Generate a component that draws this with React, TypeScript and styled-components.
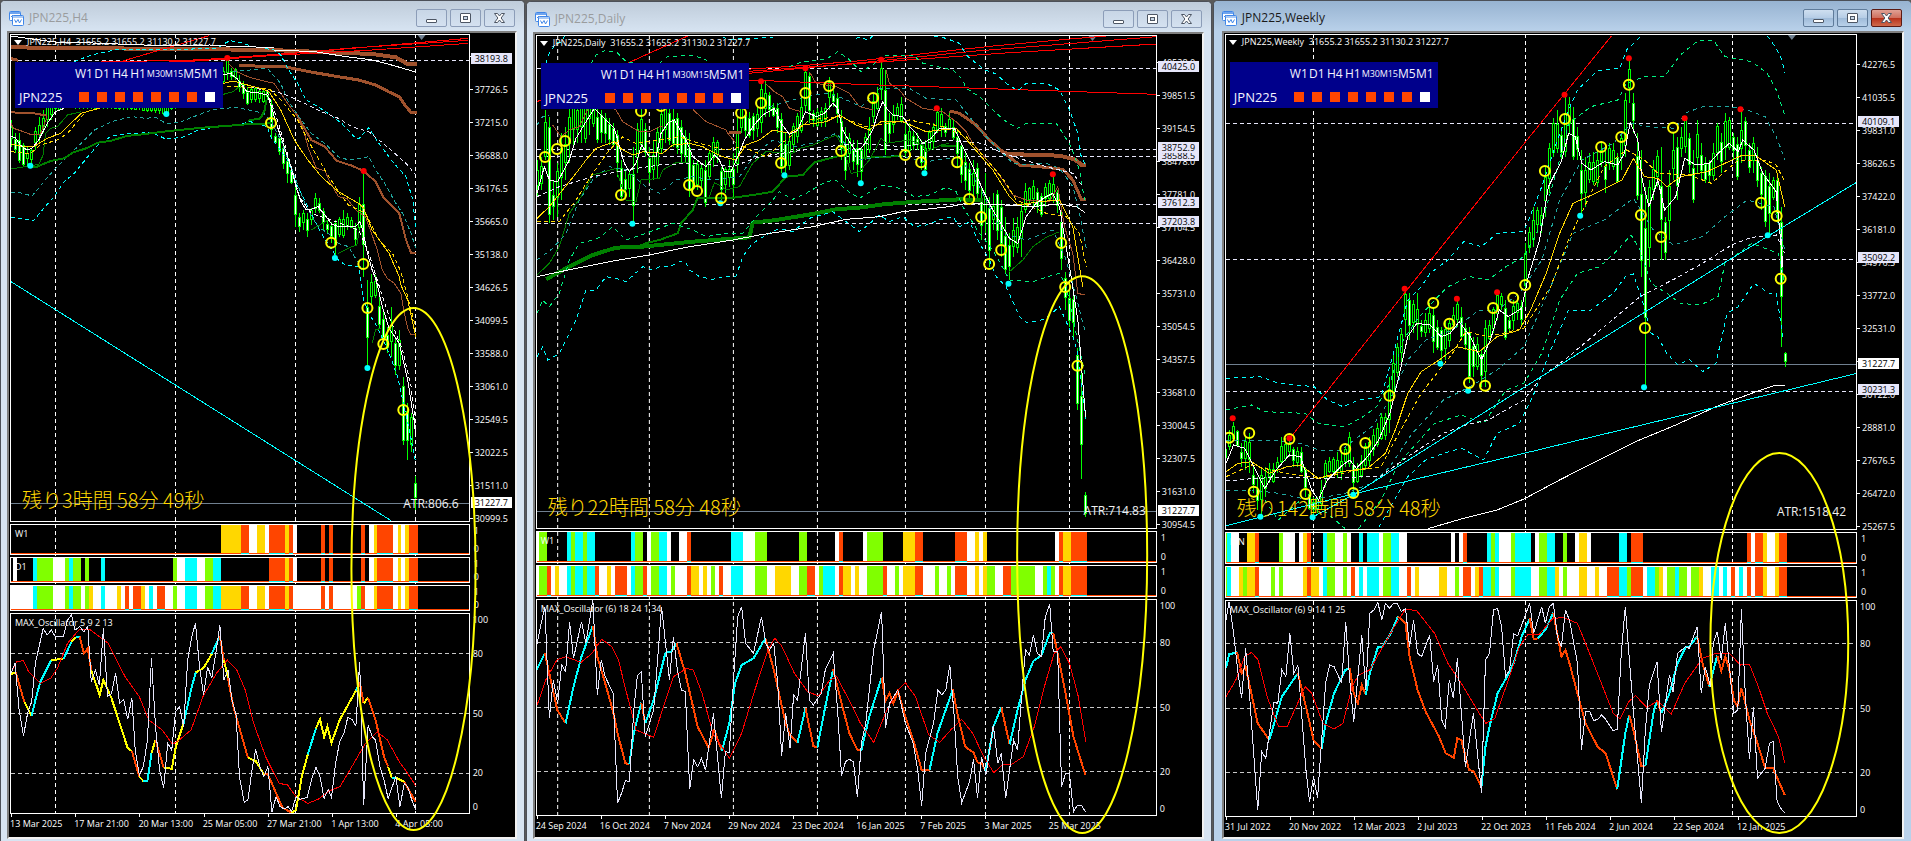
import React from "react";
import styled, { createGlobalStyle, css } from "styled-components";

const GlobalStyle = createGlobalStyle`
  *, *::before, *::after { box-sizing: border-box; }
  html, body { margin: 0; background: #5a5a5a; }
  body { font-family: "Open Sans", "Noto Sans", sans-serif; }
`;

const small = css`
  font: 9px/14px "Open Sans", "Noto Sans", sans-serif;
  white-space: pre;
`;

/* ---------- types ---------- */

type Line = { c: string; w?: number; dash?: string; p: string[] };
type Box = { text: string; top: number; live?: boolean };
type Strip = { label: string; height: number; base?: [number, number]; bars: string };
type ChartSpec = {
  name: string;
  active?: boolean;
  lowered?: boolean;
  grow: number;
  timer: string;
  atr: string;
  mainHeight: number;
  mainBox: string;
  oscBox: string;
  oscHeight: number;
  stripX: [number, number];
  grid: number[];
  levels: number[];
  liveLevel: number;
  shift: number;
  step: number;
  unitX: number;
  range: number[][];
  lines: Line[];
  rings: string;
  highs: string;
  lows: string;
  prices: string[];
  pricePad: number;
  boxes: Box[];
  strips: Strip[];
  oscName: string;
  oscLevels: number[];
  oscWhite: string;
  oscRed: string;
  oscThick: string;
  dates: string[];
  dateTail: number;
  ellipseBox: string;
  ellipse: [number, number, number, number];
};

/* ---------- palette ---------- */

const CYAN = "#00ffff";
const TEAL = "#20a8a0";
const SPRING = "#00f080";
const GOLD = "#ffd700";
const SIENNA = "#a0522d";
const GREEN = "#008000";
const LAVENDER = "#e6e6fa";
const barColor: Record<string, string> = {
  W: "#ffffff", Y: "#ffd700", O: "#ff4500", G: "#80ff00", C: "#00ffff",
};
const oscColor: Record<string, string> = { Y: "#ffff00", O: "#ff4500", C: "#00ffff" };

/* ---------- chart data ---------- */

const h4: ChartSpec = {
  name: "JPN225,H4",
  grow: 524,
  timer: "残り3時間 58分 49秒",
  atr: "ATR:806.6",
  mainHeight: 488,
  mainBox: "33 105 1352 1458",
  oscBox: "33 312 1352 597",
  oscHeight: 201,
  stripX: [33, 1352],
  grid: [165, 519, 874, 1229],
  levels: [181],
  liveLevel: 1510,
  shift: 1246,
  step: 11.83,
  unitX: 2.958,
  range: [
    [36,360,440],[45,400,460],[60,400,490],[72,430,500],[92,445,495],[104,380,450],[118,350,430],[130,330,400],[140,310,380],[165,290,340],[190,285,325],
    [410,310,330],[490,300,345],[505,300,330],[640,240,300],[660,200,250],[672,175,240],[690,205,240],[708,225,275],[732,260,315],[755,262,305],[780,265,310],[792,270,300],
    [803,300,415],[815,400,430],[827,410,465],[850,465,550],[862,500,552],[875,560,680],[886,640,695],[898,630,690],[910,640,710],[922,625,675],[934,580,640],
    [945,595,640],[957,625,690],[970,660,700],[980,665,730],[992,660,765],[1004,650,710],[1016,630,715],[1028,640,690],[1040,650,685],[1052,670,735],
    [1064,590,690],[1076,520,830],[1088,840,1095],[1099,822,915],[1110,825,895],[1122,890,985],[1134,935,1020],[1146,980,1060],[1158,920,1070],
    [1170,1010,1125],[1181,990,1110],[1193,1130,1335],[1205,1210,1380],[1217,1240,1355],[1229,1428,1530],
  ],
  lines: [
    { c: SIENNA, w: 4, p: ["33,142 300,145 560,147 800,150 1000,158 1100,162 1170,172 1205,192 1233,192"] },
    { c: SIENNA, w: 3, p: ["708,197 840,200 880,208 930,218 1000,230 1060,240 1110,255 1150,276 1180,290 1200,320 1215,337 1232,338", "33,176 54,181"] },
    { c: SIENNA, w: 2, p: ["875,340 900,385 920,420 960,440 995,482 1040,497 1075,513 1110,545 1135,595 1180,640 1200,720 1215,759 1230,759", "33,337 100,340 140,347"] },
    { c: SIENNA, p: ["675,190 700,215 740,233 810,250 850,310 880,350 900,400 910,440 935,505 960,512 975,545 1000,590 1025,595 1052,630 1080,650 1100,705 1115,750 1130,810 1145,835 1165,850 1185,880 1195,940 1205,985 1215,1004 1229,1004", "33,370 40,385 70,395 95,405 120,402 140,350"] },
    { c: "#ff0000", w: 1, p: ["1384,115 960,152 660,178 300,186", "1384,121 1040,144 860,160 500,186", "1384,130 1100,150 800,167 480,190", "618,107 370,181 345,190"] },
    { c: CYAN, dash: "4 3", p: ["220,185 270,165 340,150 500,148 640,146 665,130 680,122 720,130 740,138 810,150 830,165 850,205 880,250 905,300 940,320 970,340 1010,370 1050,413 1062,415 1090,383 1120,430 1160,485 1200,530 1220,600 1229,690", "33,652 60,655 100,661 130,625 160,590 190,545 220,520 260,470 290,435 330,408 390,400 450,398 490,417 540,412 580,393 640,380 700,375 740,365 790,380 800,410 850,480 880,560 900,600 920,640 950,700 975,740 1000,780 1020,795 1060,800 1075,900 1090,940 1115,980 1150,1060 1175,1130 1190,1200 1210,1290 1225,1370 1229,1390"] },
    { c: TEAL, dash: "4 3", p: ["690,215 790,205 830,250 850,300 880,345 920,400 960,430 1000,470 1030,480 1090,470 1110,510 1140,555 1170,610 1190,640 1215,700 1229,745", "33,578 60,578 95,588 110,570 130,545 160,510 200,470 240,430 280,390 330,365 390,350 430,355 460,352 490,370 530,368 560,355 630,328 700,322 780,340 805,370 830,420 860,500 890,580 905,620 940,680 970,700 1000,730 1030,740 1060,790 1075,820"] },
    { c: LAVENDER, dash: "4 3", p: ["740,262 810,275 840,282 900,310 950,335 1000,355 1040,380 1090,395 1150,445 1200,490 1229,525"] },
    { c: GREEN, w: 2, p: ["85,500 110,500 150,483 190,475 215,458 255,445 290,428 330,422 375,408 430,402 500,393 600,383 680,377 740,372 803,370", "733,362 770,355 783,330 787,300"] },
    { c: GREEN, p: ["33,507 85,498 115,493 128,465 135,400 150,385 170,380 200,345 240,335", "660,283 690,275 705,262 725,258", "920,690 940,678 970,660", "1000,760 1040,740 1055,735 1062,690", "1100,1030 1110,990 1125,985"] },
    { c: GOLD, p: ["33,432 70,440 100,440 140,415 180,400 210,370 240,340 300,323", "660,250 690,243 720,252 770,265 795,275 830,330 870,420 910,480 950,530 1000,575 1060,610 1075,625 1100,690 1150,760 1180,830 1185,855 1205,900 1229,1010"] },
    { c: GOLD, dash: "4 3", p: ["33,455 90,461 120,435 170,420 200,400 250,340", "670,260 760,262 800,270 830,300 880,360 910,420 960,510 1000,575 1030,615 1080,640 1120,720 1160,760 1185,815 1210,910 1229,985"] },
    { c: "#ffffff", p: ["33,108 80,115 170,127 250,128 500,138 620,135 700,140 810,142", "810,150 930,155 1010,168 1100,180 1140,190 1229,216", "33,410 45,412 60,435 80,450 95,445 115,420 140,370 165,335 190,325", "660,225 680,220 700,235 715,255 730,275 760,278 790,285 805,330 820,380 840,440 860,500 875,560 890,605 905,630 920,628 940,620 960,645 980,672 1000,680 1050,680 1064,665 1072,690 1085,755 1100,810 1112,840 1130,920 1150,985 1180,1030 1205,1140 1225,1270 1229,1310"] },
    { c: "#ffffff", dash: "4 3", p: ["790,275 820,360 850,460 885,590 920,640 980,660 1060,690 1090,760 1115,840 1150,950 1190,1050 1215,1160 1229,1280"] },
    { c: CYAN, p: ["33,845 1156,1562"] },
  ],
  rings: "801,369 979,728 1074,792 1086,924 1133,1032 1192,1230",
  highs: "672,174 1075,513",
  lows: "90,497 492,342 990,774 1086,1104",
  prices: ["38238.0","37726.5","37215.0","36688.0","36176.5","35665.0","35138.0","34626.5","34099.5","33588.0","33061.0","32549.5","32022.5","31511.0","30999.5"],
  pricePad: 6,
  boxes: [{ text: "38193.8", top: 19 }, { text: "31227.7", top: 463, live: true }],
  strips: [
    { label: "W1", height: 31, bars: "Y654-713,O713-737,W737-760,Y760-784,W784-796,O796-843,Y843-855,O855-867,W867-879,O950-962,O973-985,O1068-1080,W1092-1104,Y1104-1115,O1115-1163,W1163-1175,Y1175-1186,W1186-1198,Y1198-1210,O1210-1234" },
    { label: "D1", height: 26, bars: "W38-50,C98-110,G110-157,W157-192,G192-204,C204-215,G215-240,G251-263,C299-311,G512-524,W524-547,C547-583,W583-606,G606-629,C629-654,O796-843,Y843-855,O855-867,W867-879,O950-962,O973-985,O1068-1080,W1092-1104,Y1104-1115,O1115-1163,W1163-1175,Y1175-1186,W1186-1198,Y1198-1210,O1210-1234" },
    { label: "", height: 26, base: [31, 1234], bars: "C98-110,G110-157,G192-204,C204-215,G215-240,G251-263,Y263-275,C299-311,Y346-358,O370-382,O393-417,Y417-429,C441-453,O464-488,G512-524,C547-583,G606-629,C629-654,Y654-713,O713-737,Y760-784,O796-843,Y843-855,O855-867,O950-962,O973-985,G1056-1068,O1068-1080,Y1104-1115,O1115-1163,Y1175-1186,Y1198-1210,O1210-1234" },
  ],
  oscName: "MAX_Oscillator 5 9 2 13",
  oscLevels: [431, 610, 790],
  oscWhite: "33,490 45,460 57,600 70,677 82,610 94,575 105,460 128,355 140,375 152,360 164,380 188,380 200,330 212,314 222,360 236,350 248,365 260,350 270,515 283,480 294,525 306,355 318,560 330,550 342,490 354,580 366,568 378,628 390,563 400,720 412,795 424,770 436,690 448,445 460,650 472,780 484,835 496,700 508,720 519,605 531,590 543,650 555,450 567,380 578,340 590,470 602,555 614,470 626,505 638,430 650,345 662,510 674,480 686,570 698,615 708,800 722,877 733,870 745,780 756,718 768,770 780,800 792,770 804,907 816,860 828,890 840,897 852,890 862,905 875,860 887,868 908,862 922,805 934,772 946,800 958,865 970,838 980,862 992,760 1004,695 1016,672 1028,622 1040,628 1052,648 1063,455 1075,885 1088,645 1100,680 1110,690 1123,770 1135,810 1147,865 1170,800 1182,890 1195,820 1205,830 1217,870 1229,900",
  oscRed: "33,490 50,455 70,452 85,485 120,520 150,505 170,475 200,400 235,358 265,358 320,400 370,500 412,560 440,630 480,660 510,703 530,690 565,660 600,560 640,490 672,450 700,480 725,540 750,640 785,740 825,820 850,825 875,860 910,880 940,868 975,842 1005,830 1040,770 1080,700 1115,665 1145,690 1180,755 1205,790 1229,828",
  oscThick: "Y 33,492 47,487|O 72,575|Y 94,618|C 105,570 120,515 152,450|Y 188,447|C 212,395|Y 224,382|C 236,380|O 248,430 260,415 270,480|Y 295,555 306,510 330,565 354,640 378,715 390,723|O 412,800|Y 424,813|C 436,813 448,730|Y 460,690|O 484,773|Y 508,776 520,710 543,640|C 567,530 579,487|Y 602,474 626,432|C 650,377|O 662,450|Y 674,505|O 690,590 733,743|Y 756,753 780,793|O 792,793 835,893 862,908|Y 875,900 892,800 910,733|C 934,655|Y 946,628 958,680 968,650 980,698 1004,630 1052,542|C 1063,515|O 1075,580|Y 1088,563|O 1110,630 1135,740 1147,770|Y 1158,803|C 1170,803|Y 1195,816|O 1229,877",
  dates: ["13 Mar 2025", "17 Mar 21:00", "20 Mar 13:00", "25 Mar 05:00", "27 Mar 21:00", "1 Apr 13:00", "4 Apr 05:00"],
  dateTail: 10,
  ellipseBox: "10 34 504 800",
  ellipse: [413, 567, 62, 260],
};

const daily: ChartSpec = {
  name: "JPN225,Daily",
  lowered: true,
  grow: 686,
  timer: "残り22時間 58分 48秒",
  atr: "ATR:714.83",
  mainHeight: 494,
  mainBox: "33 108 1857 1476",
  oscBox: "25 270 1407 645",
  oscHeight: 217,
  stripX: [25, 1407],
  grid: [95, 370, 622, 874, 1138, 1378, 1630],
  levels: [205, 448, 469, 613, 670],
  liveLevel: 1534,
  shift: 1699,
  step: 12,
  unitX: 3,
  range: [
    [35,480,590],[47,470,570],[60,330,480],[70,350,670],[83,540,660],[95,490,650],[107,400,600],[119,380,540],[131,270,490],[143,280,440],[155,280,430],[180,250,430],
    [200,260,380],[215,320,430],[240,340,430],[262,370,440],[275,390,530],[287,480,600],[300,510,600],[311,510,590],[323,440,670],[335,370,520],[347,320,450],[359,370,470],
    [371,440,550],[383,420,540],[395,380,535],[407,320,460],[420,290,430],[443,320,440],[467,360,485],[480,390,490],[490,400,590],[502,480,570],[514,480,570],[526,490,560],
    [538,480,620],[550,450,540],[562,410,500],[574,420,490],[586,500,600],[598,500,580],[610,480,560],[622,460,590],[634,350,520],[646,290,400],[658,330,410],[680,340,420],
    [694,320,410],[706,250,400],[718,240,350],[742,310,350],[755,310,400],[768,340,520],[780,400,530],[792,400,510],[804,370,460],[816,340,430],[828,290,400],[838,205,340],
    [850,215,370],[862,330,380],[886,320,380],[898,310,380],[910,230,330],[922,270,320],[934,280,370],[946,330,480],[958,380,540],[970,400,490],[982,420,510],[994,420,530],
    [1006,440,545],[1018,400,480],[1030,350,460],[1042,280,370],[1054,260,330],[1066,180,300],[1078,210,465],[1090,340,430],[1102,315,400],[1114,310,360],[1126,290,370],
    [1138,370,470],[1150,370,460],[1162,390,450],[1174,400,450],[1186,420,510],[1198,420,520],[1210,390,450],[1222,370,450],[1234,330,400],[1246,325,410],[1258,370,410],
    [1270,340,390],[1282,360,420],[1294,390,500],[1306,430,550],[1318,460,570],[1330,490,600],[1342,480,600],[1354,490,600],[1366,560,720],[1378,520,700],[1390,590,800],
    [1402,580,690],[1414,570,720],[1426,600,770],[1438,650,820],[1450,700,840],[1462,655,770],[1474,650,760],[1486,610,770],[1498,550,640],[1510,560,610],[1522,540,620],
    [1534,565,640],[1546,580,650],[1558,550,620],[1570,540,600],[1582,520,610],[1594,570,640],[1606,620,810],[1618,815,930],[1630,850,980],[1642,875,1020],[1654,1045,1230],[1666,1120,1437],[1678,1475,1550],
  ],
  lines: [
    { c: GREEN, w: 4, p: ["60,838 120,805 200,765 270,743 350,740 500,725 670,712 680,668 750,660 860,642 930,628 1010,622 1070,613 1160,606 1300,598 1370,600"] },
    { c: GREEN, w: 2, p: ["340,738 365,728 400,720 455,700 465,670 500,630 514,595 610,595 700,582 740,575 780,530 830,525 865,487 950,465", "1010,475 1040,472 1130,468", "1245,438 1290,438"] },
    { c: GREEN, p: ["33,825 70,790 100,740 130,640 165,590 200,525 270,505 300,600 330,605 345,540 400,535 410,510 450,488 490,488", "550,590 565,548 580,555 600,570 640,560 680,490 720,455 800,460 820,445 860,435 930,405 950,440 975,520 1000,515 1030,480 1065,415 1080,430 1150,420 1190,435 1200,455 1245,435 1270,430", "1450,815 1490,780 1520,740 1560,712 1600,695"] },
    { c: SIENNA, w: 3, p: ["1270,333 1300,340 1350,375 1390,420 1430,455 1480,495 1560,502 1610,508 1640,540 1665,597 1678,597", "610,397 645,397"] },
    { c: SIENNA, w: 4, p: ["1433,460 1500,464 1600,467 1645,478 1668,496 1680,496"] },
    { c: SIENNA, p: ["80,375 105,410 130,390 160,380 200,300 270,330 290,365 340,395 370,395 400,380 410,380", "500,328 540,365 600,390 605,400 630,430", "718,250 745,275 770,290 790,325 825,335", "850,215 870,250 930,260 970,280 1000,320 1040,330", "1080,210 1090,250 1120,270 1140,295 1190,325 1250,335 1290,365 1320,395 1340,430 1400,500 1430,540 1460,585 1500,600 1570,605 1595,560 1615,680 1640,760 1655,880 1675,885"] },
    { c: "#ff0000", w: 1, p: ["303,190 485,108", "660,208 840,196 1005,182 1200,160 1400,138 1620,118 1740,108", "668,220 1005,188 1350,153 1891,110", "668,214 1005,190 1450,158 1891,132", "668,240 1000,253 1891,283", "33,305 50,298"] },
    { c: CYAN, dash: "4 4", p: ["60,190 70,160 90,130 110,125 115,108", "590,110 605,118 740,112", "990,115 1005,110 1025,122 1040,108", "1225,108 1260,115 1300,130 1320,165 1350,190 1378,210 1410,222 1440,250 1475,272 1500,250 1560,250 1600,270 1630,330 1655,400 1665,470 1680,500", "33,1070 50,1040 65,1080 100,1060 150,960 180,870 210,870 240,830 270,835 300,845 350,800 380,810 400,800 430,800 460,785 478,785 490,810 520,830 560,838 600,828 630,828 650,770 680,730 720,705 760,685 800,695 850,655 920,635 960,665 1000,695 1020,680 1060,645 1090,665 1130,650 1165,680 1200,675 1240,660 1280,650 1300,680 1330,665 1360,730 1390,780 1410,830 1440,860 1480,950 1500,967 1530,965 1560,955 1600,920 1640,1010 1655,1060 1675,1230 1680,1260"] },
    { c: SPRING, dash: "4 4", p: ["195,190 210,165 235,153 270,155 300,185 340,190", "400,190 425,170 500,165 540,180 560,200 590,185", "790,200 830,185 900,178 935,155 965,175 1005,215 1040,195 1070,165 1160,165 1190,190 1280,210 1310,240 1320,265 1360,290 1400,330 1440,365 1475,385 1500,370 1590,370 1610,400 1635,440 1660,510 1675,600", "33,940 50,900 70,920 100,880 130,780 160,730 200,720 225,710 260,680 300,720 360,700 440,670 500,690 540,710 600,700 650,700 700,640 740,600 760,575 800,598 840,580 900,545 930,540 960,570 1000,595 1065,555 1120,565 1165,590 1210,585 1260,562 1290,575 1310,620 1360,700 1400,750 1450,840 1520,845 1580,825 1600,820 1620,860 1650,1000 1678,1130"] },
    { c: TEAL, dash: "4 4", p: ["33,375 50,350 70,345", "730,320 800,300 860,285 900,280 950,295 1005,320 1060,265 1150,265 1200,295 1290,300 1310,325 1370,400 1420,450 1460,490 1500,495 1560,490 1600,505 1640,560 1660,640 1680,745", "33,780 80,745 120,700 160,600 200,540 250,500 300,510 360,560 400,580 450,540 500,530 560,540 640,530 690,460 740,420 800,440 860,430 930,400 1000,480 1100,465 1200,485 1300,470 1360,560 1430,700 1500,720 1580,690 1620,780 1650,890 1678,1000"] },
    { c: LAVENDER, dash: "4 3", p: ["33,590 100,560 200,530 300,510 400,495 500,490 620,500 700,470 800,455 900,440 1000,430 1130,440 1250,420 1370,430 1430,460 1560,500 1640,520 1670,560"] },
    { c: GOLD, p: ["33,655 70,620 110,570 150,520 180,480 210,445 265,425 290,450 320,465 350,455 410,460 440,435 490,430 530,440 590,470 630,480 660,435 700,420 740,390 790,400 830,375 900,365 940,345 990,375 1030,390 1065,365 1130,365 1200,395 1290,385 1340,440 1400,510 1450,590 1475,615 1540,605 1600,600 1640,680 1670,860"] },
    { c: GOLD, dash: "4 3", p: ["33,665 100,665 150,600 200,520 250,450 290,410 330,430 400,420 460,410 520,430 600,450 650,440 720,470 780,420 850,360 940,350 1020,380 1150,360 1250,380 1320,410 1400,500 1440,550 1470,600 1560,640 1620,650 1660,700 1680,800"] },
    { c: "#ffffff", p: ["33,830 150,805 250,785 370,765 480,742 620,720 700,705 860,680 960,658 1060,650 1130,635 1270,620 1320,610 1420,614 1520,620 1600,612 1650,620 1677,638", "33,580 55,500 70,540 95,545 130,480 150,415 180,365 205,325 230,350 265,385 280,440 295,490 310,515 330,490 347,435 370,470 390,470 405,400 425,370 445,360 480,420 500,470 540,500 565,465 580,480 595,515 615,515 635,470 655,420 680,380 710,345 745,325 765,370 790,403 815,390 838,335 870,350 895,340 920,310 935,325 950,390 970,425 990,455 1010,440 1040,390 1055,340 1070,305 1085,330 1100,345 1130,350 1150,380 1170,400 1190,430 1215,415 1240,385 1285,385 1310,440 1340,500 1370,570 1400,630 1430,680 1450,715 1475,730 1500,650 1530,610 1560,590 1580,580 1600,620 1630,800 1655,960 1678,1250"] },
  ],
  rings: "57,471 93,447 117,423 285,585 345,333 405,318 489,555 513,573 585,595 645,339 705,309 765,489 838,279 909,258 945,453 1041,294 1137,465 1185,487 1293,487 1329,597 1365,651 1389,792 1425,750 1605,729 1617,861 1654,1097",
  highs: "705,244 838,205 1065,179 1232,325 1580,523",
  lows: "319,671 583,610 775,526 1004,550 1195,520 1447,851",
  prices: ["40528.0","39851.5","39154.5","38478.0","37781.0","37104.5","36428.0","35731.0","35054.5","34357.5","33681.0","33004.5","32307.5","31631.0","30954.5"],
  pricePad: 11,
  boxes: [
    { text: "38588.5", top: 115 }, { text: "40425.0", top: 26 }, { text: "38752.9", top: 107 },
    { text: "37612.3", top: 162 }, { text: "37203.8", top: 181 }, { text: "31227.7", top: 470, live: true },
  ],
  strips: [
    { label: "W1", height: 32, bars: "W24-30,G30-48,C93-102,G102-111,C111-129,G129-139,C139-157,C239-248,G248-266,W275-284,G284-302,C302-320,W320-330,W348-366,O366-375,C466-493,W493-520,G520-548,G620-639,W702-711,O711-720,W766-775,G775-811,Y857-884,O884-902,O975-1002,W1002-1020,Y1020-1029,W1029-1039,Y1039-1048,W1202-1211,O1211-1220,Y1220-1238,O1238-1275" },
    { label: "", height: 32, base: [24, 1275], bars: "G30-48,O48-57,Y66-75,C93-102,G102-111,C111-129,G129-139,C139-157,O157-166,Y184-193,O202-230,C239-248,G248-266,O266-275,G284-302,C302-320,G330-339,O366-375,Y375-393,Y402-411,G420-429,O439-448,C466-493,G520-548,Y566-602,G620-639,O639-657,G666-675,C675-702,O711-720,Y720-739,Y748-757,G775-811,O811-820,G839-848,Y857-884,O884-902,G929-939,G957-966,O975-1002,Y1020-1029,Y1039-1048,G1048-1066,O1084-1102,G1102-1157,G1175-1184,C1184-1193,G1193-1202,O1211-1220,Y1220-1238,O1238-1275" },
  ],
  oscName: "MAX_Oscillator (6) 18 24 1 34",
  oscLevels: [398, 593, 785],
  oscWhite: "24,410 33,350 43,290 53,625 62,510 72,580 81,465 90,485 99,335 108,445 126,335 136,400 152,270 162,555 171,450 180,500 198,550 208,880 217,850 226,812 235,815 245,600 253,497 262,485 271,680 290,600 299,450 308,290 326,510 335,380 344,480 353,540 362,545 372,838 381,750 390,770 399,745 408,780 426,610 444,865 453,725 462,728 472,500 481,320 490,290 499,400 517,430 535,320 545,400 553,420 563,400 572,520 581,738 590,610 600,715 608,555 617,570 635,370 644,570 653,585 671,550 680,480 698,430 708,600 717,798 726,755 735,748 744,755 753,862 762,700 772,640 790,420 808,305 817,655 826,580 845,540 862,640 880,700 890,780 899,888 908,730 926,640 936,540 945,555 954,540 963,465 972,600 981,800 990,878 1008,815 1017,748 1026,865 1035,740 1045,795 1062,645 1072,760 1080,730 1090,865 1108,690 1117,720 1126,560 1135,420 1144,435 1153,375 1162,430 1171,440 1180,320 1190,282 1198,425 1208,425 1217,830 1226,790 1235,792 1244,905 1253,885 1262,885 1271,905",
  oscRed: "24,590 45,510 70,450 90,440 125,457 150,430 172,388 195,410 210,450 225,530 250,660 290,682 310,600 335,500 365,475 380,480 400,550 425,670 462,745 490,670 520,540 550,420 565,385 580,405 610,490 640,545 665,558 690,510 706,500 730,560 760,640 790,697 820,600 845,540 862,518 885,560 915,675 940,697 965,660 990,628 1015,670 1040,740 1063,788 1085,762 1105,762 1130,740 1155,650 1180,520 1200,430 1215,410 1235,460 1255,560 1272,695",
  oscThick: "C 24,480 43,430|O 53,490 71,600 90,640|C 108,530 126,440 152,347|O 162,440 180,520 198,605 208,670 226,760 235,762|C 245,670 262,578|O 271,640|C 290,570 317,428 330,425 342,400|O 362,490 390,650 415,713 428,660 445,723|C 462,640 475,520 490,465 517,445 544,385|O 563,480 590,640 600,675 617,698|C 635,595|O 653,708 662,713|C 680,590 698,478|O 717,580 735,670 753,720 762,722|C 780,620 808,503|O 817,573 826,550 835,580 845,543 862,620 880,690 899,780 917,780|C 935,670 970,538|O 980,610 998,710 1017,728 1026,757 1035,760 1045,783|C 1062,650 1080,592|O 1099,703|C 1117,600 1135,510 1153,453 1171,437 1190,370 1198,368|O 1208,430 1226,550 1244,680 1271,795",
  dates: ["24 Sep 2024", "16 Oct 2024", "7 Nov 2024", "29 Nov 2024", "23 Dec 2024", "16 Jan 2025", "7 Feb 2025", "3 Mar 2025", "25 Mar 2025"],
  dateTail: 44,
  ellipseBox: "535 35 666 801",
  ellipse: [1081, 554, 65, 278],
};

const weekly: ChartSpec = {
  name: "JPN225,Weekly",
  active: true,
  grow: 699,
  timer: "残り142時間 58分 48秒",
  atr: "ATR:1518.42",
  mainHeight: 496,
  mainBox: "33 105 1411 1482",
  oscBox: "33 273 1411 645",
  oscHeight: 217,
  stripX: [33, 1411],
  grid: [229, 703, 1168],
  levels: [370, 778, 1174],
  liveLevel: 1093,
  shift: 1300,
  step: 8.95,
  unitX: 2.237,
  range: [
    [33,1330,1390],[42,1290,1350],[50,1265,1320],[60,1290,1340],[70,1330,1400],[80,1310,1410],[88,1300,1420],[97,1400,1480],[106,1430,1530],[114,1400,1545],[124,1400,1490],
    [135,1390,1450],[148,1370,1420],[160,1310,1390],[175,1320,1370],[188,1340,1400],[202,1340,1420],[211,1400,1490],[220,1470,1530],[229,1490,1550],[238,1490,1540],
    [247,1440,1530],[256,1380,1460],[270,1370,1420],[290,1350,1440],[300,1340,1400],[310,1295,1400],[320,1370,1480],[330,1390,1450],[345,1330,1410],[355,1310,1400],
    [370,1270,1340],[385,1240,1320],[398,1130,1300],[408,1060,1200],[418,1030,1130],[427,985,1090],[435,870,1010],[444,880,1020],[453,900,1000],[462,880,1020],[471,960,1010],
    [480,940,1010],[489,910,1000],[498,920,1060],[507,960,1050],[516,980,1090],[525,960,1080],[534,960,1040],[543,920,990],[552,900,980],[561,920,1020],[570,970,1050],
    [579,980,1150],[588,1010,1130],[597,1010,1110],[606,1050,1160],[614,960,1160],[623,960,1020],[632,920,1000],[640,880,960],[650,880,930],[659,900,1020],[668,950,1000],
    [677,900,990],[686,900,960],[695,900,980],[703,730,920],[712,680,760],[722,620,740],[735,620,700],[745,500,650],[754,430,580],[765,355,470],[774,330,460],[783,380,480],
    [792,290,470],[802,290,400],[811,320,480],[820,380,480],[829,450,645],[838,470,620],[850,460,550],[862,450,560],[873,430,500],[882,450,580],[895,430,510],[908,460,550],
    [917,400,510],[926,280,470],[936,180,310],[945,280,400],[954,400,600],[963,450,830],[972,560,1160],[981,540,800],[990,480,600],[999,450,560],[1007,440,780],[1016,650,780],
    [1025,510,720],[1035,400,540],[1043,410,600],[1053,380,470],[1061,350,460],[1070,400,520],[1079,450,610],[1088,360,520],[1097,430,540],[1106,470,550],[1115,480,550],
    [1125,430,540],[1135,370,480],[1143,400,520],[1152,340,480],[1162,350,450],[1170,400,480],[1179,410,540],[1188,330,490],[1197,350,480],[1206,430,520],[1215,410,520],
    [1224,440,560],[1233,500,630],[1242,510,680],[1250,520,700],[1258,530,600],[1267,520,670],[1276,620,1040],[1285,1055,1100],
  ],
  lines: [
    { c: "#ff0000", p: ["176,1315 438,870 704,425 896,108"] },
    { c: CYAN, dash: "4 4", p: ["33,1135 110,1130 150,1150 230,1160 260,1200 295,1220 330,1200 380,1190 410,1050 440,900 470,860 490,820 530,780 565,725 605,740 640,700 700,695 740,560 770,440 800,330 820,270 865,212 915,205 930,150 960,112", "1245,108 1260,135 1275,170 1285,220", "375,1582 410,1500 440,1430 480,1380 520,1360 560,1345 610,1380 640,1300 690,1270 720,1190 760,1050 800,930 850,930 900,880 930,825 945,822 965,900 985,1000 1000,1010 1020,1060 1045,1095 1070,1078 1100,1115 1130,1090 1155,940 1180,920 1215,850 1250,880 1265,880 1280,1010"] },
    { c: SPRING, dash: "4 4", p: ["33,1230 90,1215 120,1235 210,1240 240,1270 300,1280 340,1250 370,1220 400,1150 430,1020 460,960 500,900 530,860 580,830 620,840 660,800 700,770 740,670 780,480 800,370 850,320 910,300 930,250 970,230 1015,230 1050,165 1090,122 1125,122 1150,170 1210,185 1245,220 1265,270 1285,350", "330,1586 380,1500 420,1390 460,1330 500,1270 560,1245 610,1270 660,1170 700,1150 740,1060 780,900 820,820 870,800 910,750 940,705 960,750 985,850 1020,880 1050,910 1095,915 1135,890 1150,790 1210,730 1270,760 1284,850", "120,1500 150,1560 200,1500 260,1540 300,1586"] },
    { c: TEAL, dash: "4 4", p: ["33,1320 150,1322 200,1330 240,1350 290,1350 330,1310 360,1280 400,1200 440,1080 480,1020 540,990 600,930 640,930 690,880 740,780 780,600 830,480 900,430 940,370 980,380 1040,385 1060,340 1100,320 1160,320 1200,330 1240,350 1265,410 1285,480", "33,1470 90,1470 150,1480 220,1500 300,1480 360,1450 400,1400 450,1300 520,1200 580,1160 640,1110 700,1040 760,860 810,700 880,660 945,595 990,690 1035,735 1100,710 1150,650 1200,600 1260,620 1284,750"] },
    { c: LAVENDER, dash: "4 3", p: ["33,1443 100,1435 160,1432 250,1435 380,1428 440,1370 520,1300 570,1275 620,1260 700,1200 740,1130 800,1070 880,980 960,890 1040,835 1100,790 1165,735 1210,712 1265,705 1284,760"] },
    { c: GOLD, p: ["33,1415 60,1390 90,1385 130,1420 170,1400 200,1395 240,1435 290,1415 350,1405 390,1360 415,1280 440,1180 470,1115 510,1080 550,1040 600,1055 640,1010 690,990 715,930 750,820 780,700 810,610 860,580 920,540 945,475 970,530 1000,535 1020,560 1050,530 1110,515 1150,490 1190,465 1220,468 1265,510 1284,620"] },
    { c: GOLD, dash: "4 3", p: ["33,1430 90,1395 150,1415 240,1435 330,1410 380,1400 420,1300 470,1180 540,1060 570,995 620,1010 700,985 760,860 800,720 850,580 880,500 930,450 970,480 1000,520 1070,525 1120,550 1180,480 1240,480 1265,495 1284,545"] },
    { c: "#ffffff", p: ["485,1586 560,1557 640,1530 700,1497 780,1440 860,1385 950,1325 1040,1275 1130,1220 1220,1175 1262,1156 1284,1156", "33,1390 50,1335 75,1345 95,1400 120,1465 145,1410 175,1365 200,1370 225,1470 240,1500 260,1440 290,1400 310,1380 325,1405 350,1370 375,1320 400,1240 420,1130 440,1010 460,970 490,975 515,1010 535,1000 555,965 580,1010 605,1080 625,1020 645,930 665,950 695,925 710,830 735,720 755,560 785,480 800,400 815,410 830,490 850,510 880,485 910,495 925,460 938,368 955,420 965,540 980,620 1000,540 1015,630 1040,590 1060,475 1085,495 1115,490 1135,460 1160,430 1180,455 1190,420 1215,450 1235,520 1265,575 1280,800"] },
    { c: CYAN, p: ["33,1577 318,1482 700,1360 1446,1120", "229,1550 318,1484 703,1160 970,937 1165,775 1446,546"] },
  ],
  rings: "40,1313 85,1299 95,1475 175,1317 211,1482 300,1347 318,1479 345,1329 399,1187 497,909 533,971 577,1149 613,1157 631,924 676,893 703,855 747,513 792,357 873,441 918,411 935,254 962,645 1007,711 1034,383 971,984 1231,608 1266,648 1275,836",
  highs: "48,1255 175,1315 433,866 550,896 640,877 791,284 935,175 1060,355 1185,328",
  lows: "110,1550 227,1552 318,1484 513,1091 575,1172 826,647 969,1162 1246,706",
  prices: ["42276.5","41035.5","39831.0","38626.5","37422.0","36181.0","34976.5","33772.0","32531.0","31326.5","30122.0","28881.0","27676.5","26472.0","25267.5"],
  pricePad: 14,
  boxes: [
    { text: "40109.1", top: 82 }, { text: "35092.2", top: 218 },
    { text: "30231.3", top: 350 }, { text: "31227.7", top: 324, live: true },
  ],
  strips: [
    { label: "MN", height: 32, bars: "G31-35,C35-45,W45-63,Y81-98,O98-107,G152-161,W161-188,W197-206,Y206-215,O215-224,C251-260,G260-277,W277-295,G295-304,W304-313,C331-340,C349-376,W376-385,G385-403,C403-421,W421-438,W537-546,W555-564,O564-573,C617-626,G626-635,C635-644,W644-671,G671-680,C680-716,W725-734,G734-752,C752-769,G787-796,W814-823,Y823-841,W841-850,C913-931,O939-966,O1199-1208,W1208-1217,O1217-1235,Y1235-1244,W1244-1262,Y1262-1271,O1271-1288" },
    { label: "", height: 32, base: [31, 1288], bars: "G31-35,C35-45,Y63-72,G72-81,Y81-98,O98-107,G134-143,G152-161,Y206-215,O215-224,Y224-242,C251-260,G260-277,G295-304,O313-322,C331-340,C349-376,G385-403,C403-421,O438-447,Y456-465,Y510-528,G546-555,O564-582,Y591-599,O599-608,C608-626,G626-635,C635-644,G671-680,C680-716,G734-752,C752-769,Y769-778,G787-796,Y823-841,Y859-868,O886-913,C913-931,G931-939,O939-966,C975-993,G993-1002,Y1002-1011,G1020-1038,C1038-1047,G1047-1065,G1074-1092,Y1092-1101,C1118-1136,C1145-1154,O1163-1172,C1181-1190,O1199-1208,O1217-1235,Y1235-1244,Y1262-1271,O1271-1288" },
  ],
  oscName: "MAX_Oscillator (6) 9 14 1 25",
  oscLevels: [401, 596, 788],
  oscWhite: "33,330 40,275 50,370 60,490 68,565 77,415 86,560 104,900 113,725 122,745 140,577 149,580 158,480 167,500 176,370 185,490 194,465 212,780 220,875 229,800 238,865 256,520 265,465 275,470 292,520 301,335 310,510 319,635 337,375 346,540 355,310 364,300 373,277 382,330 390,280 399,295 408,280 417,282 426,305 435,295 444,410 453,330 462,430 471,440 489,375 498,515 507,465 516,630 524,652 533,510 542,565 551,445 569,770 587,610 605,848 614,450 623,430 632,300 641,295 650,350 659,500 668,480 677,372 686,378 713,280 722,370 740,290 748,340 757,290 766,280 775,380 784,410 793,300 802,330 820,460 829,720 838,603 847,603 856,632 865,628 874,615 883,628 900,662 909,658 918,430 927,290 945,600 963,878 972,660 981,525 998,455 1008,665 1026,495 1034,545 1044,430 1062,410 1070,415 1088,350 1097,550 1106,470 1118,530 1124,400 1133,365 1142,450 1151,340 1170,610 1179,600 1187,298 1196,560 1205,748 1214,590 1223,805 1240,775 1250,700 1258,695 1267,875 1275,895 1284,908",
  oscRed: "33,560 55,510 75,440 90,427 105,450 125,560 150,648 170,650 190,590 210,530 225,550 250,640 275,657 295,640 315,530 330,495 355,480 380,420 410,350 435,297 460,302 500,370 530,460 560,520 600,610 615,640 635,625 660,530 690,410 710,372 735,372 765,325 790,323 820,340 850,440 900,610 915,627 935,575 950,557 975,592 1000,573 1030,612 1060,520 1100,445 1130,430 1160,430 1185,465 1205,463 1225,530 1245,610 1270,680 1284,758",
  oscThick: "C 33,475 40,433 58,427|O 68,490 77,470 104,640 130,690|C 158,560 194,490|O 212,590 229,690 247,718|C 256,640 275,550 300,480 310,475|O 319,550 328,580 337,525 346,555|C 355,490 373,412 382,412 400,375 418,320|O 435,340 444,440 462,540 480,605 510,680 525,730 543,743 551,685 560,690 577,780 587,783 605,830|C 614,710 623,650 641,550 660,505 677,460 695,380 713,325|O 722,387 731,385|C 748,360 766,308|O 784,440 793,420 802,460 820,550 838,640 865,710 883,730 909,838|C 927,670 936,615|O 945,660 963,768 972,768|C 990,610 998,570|O 1008,610|C 1026,550 1044,460 1062,412 1070,410 1088,380|O 1100,460 1115,530|C 1133,437|O 1142,483 1151,440 1160,480 1170,570 1178,590 1187,535 1196,580 1205,630 1223,700 1240,773 1258,775 1284,855",
  dates: ["31 Jul 2022", "20 Nov 2022", "12 Mar 2023", "2 Jul 2023", "22 Oct 2023", "11 Feb 2024", "2 Jun 2024", "22 Sep 2024", "12 Jan 2025"],
  dateTail: 56,
  ellipseBox: "1224 34 678 803",
  ellipse: [1779, 643, 69, 190],
};

/* ---------- window chrome ---------- */

const Desktop = styled.main`
  display: flex;
  gap: 1px;
  min-height: 100vh;
  overflow: hidden;
`;

const Frame = styled.section<{ $grow: number; $active?: boolean; $lowered?: boolean }>`
  flex: ${(p) => p.$grow} 1 0;
  min-width: 0;
  display: flex;
  flex-direction: column;
  margin-top: ${(p) => (p.$lowered ? 1 : 0)}px;
  background: ${(p) => (p.$active ? "#b9d1ea" : "#d7e4f2")};
  border: solid #4c5058;
  border-width: 1px ${(p) => (p.$active ? 0 : 1)}px 0 1px;
  border-radius: 5px 5px 0 0;
`;

const TitleBar = styled.header<{ $active?: boolean }>`
  display: flex;
  align-items: center;
  gap: 5px;
  height: 30px;
  padding: 4px 9px 0 8px;
  border-radius: 4px 4px 0 0;
  background: ${(p) => (p.$active ? "linear-gradient(#97b3d1, #b9d1ea)" : "linear-gradient(#bfccda, #d7e4f2)")};
`;

const Title = styled.h2<{ $active?: boolean }>`
  flex: 1;
  margin: 0;
  font: 400 12px/18px "Open Sans", "Noto Sans", sans-serif;
  color: ${(p) => (p.$active ? "#1a1a1a" : "#9a9c9e")};
`;

const Buttons = styled.div`
  display: flex;
  gap: 3px;
`;

const ChromeButton = styled.button<{ $kind: "plain" | "blue" | "red" }>`
  display: flex;
  align-items: center;
  justify-content: center;
  width: 31px;
  height: 18px;
  padding: 0;
  border: 1px solid ${(p) => (p.$kind === "red" ? "#5b1a14" : p.$kind === "blue" ? "#5f7b9a" : "#8c9db8")};
  border-radius: 2px;
  background: ${(p) =>
    p.$kind === "red"
      ? "linear-gradient(#e0a195, #d0705f 48%, #b8321c 52%, #cf6a4c)"
      : p.$kind === "blue"
      ? "linear-gradient(#cfdff0, #b6cde6 48%, #9fbbd9 52%, #b9d1ea)"
      : "linear-gradient(#c8d6e6, #d4e1f0)"};
`;

const Client = styled.div<{ $active?: boolean }>`
  flex: 1;
  display: flex;
  margin: 0 7px 5px ${(p) => (p.$active ? 8 : 6)}px;
  padding: 1px 0 0 1px;
  border: 2px solid;
  border-color: #7f7f7f #f2f2f2 #f2f2f2 #7f7f7f;
  background: #000;
  min-width: 0;
`;

/* ---------- chart layout ---------- */

const ChartGrid = styled.div`
  position: relative;
  flex: 1;
  min-width: 0;
  display: flex;
  flex-direction: column;
  gap: 2px;
`;

const PanelRow = styled.div<{ $h: number }>`
  position: relative;
  display: grid;
  grid-template-columns: minmax(0, 1fr) 45px;
  grid-template-rows: minmax(0, 1fr);
  flex: none;
  height: ${(p) => p.$h}px;
`;

const Plot = styled.div`
  position: relative;
  border: 1px solid #fff;
  min-width: 0;
  min-height: 0;
`;

const Drawing = styled.svg`
  display: block;
  width: 100%;
  height: 100%;
  * { vector-effect: non-scaling-stroke; }
`;

const Layer = styled.svg`
  position: absolute;
  inset: 0;
  width: 100%;
  height: 100%;
  pointer-events: none;
  * { vector-effect: non-scaling-stroke; }
`;

const GridColumns = styled.div<{ $h: number }>`
  position: absolute;
  top: 0;
  left: 0;
  right: 45px;
  height: ${(p) => p.$h}px;
  padding: 0 1px;
`;

const Caption = styled.div`
  ${small}
  position: absolute;
  left: 4px;
  top: 2px;
  color: #fff;
`;

const Quote = styled.div`
  ${small}
  position: absolute;
  left: 3px;
  top: 0;
  display: flex;
  align-items: center;
  gap: 5px;
  color: #fff;
`;

const Remaining = styled.div`
  position: absolute;
  left: 11px;
  bottom: 9px;
  font: 300 20px/24px "Noto Sans CJK JP", sans-serif;
  color: #ffd700;
  white-space: nowrap;
`;

const Atr = styled.div`
  position: absolute;
  right: 10px;
  bottom: 9px;
  font: 12px/16px "Open Sans", "Noto Sans", sans-serif;
  color: #f0f0f0;
`;

const Axis = styled.ul<{ $pad: number }>`
  position: relative;
  margin: 0;
  padding: ${(p) => p.$pad}px 0 0;
  list-style: none;
  overflow: visible;
`;

const Price = styled.li`
  ${small}
  display: flex;
  align-items: center;
  gap: 2px;
  height: 33px;
  color: #fff;
  &::before { content: ""; width: 3px; height: 1px; background: #fff; }
`;

const PriceBox = styled.li<{ $top: number; $live?: boolean }>`
  ${small}
  position: absolute;
  left: 1px;
  top: ${(p) => p.$top}px;
  width: 41px;
  padding-left: 4px;
  line-height: 11px;
  color: #000;
  background: ${(p) => (p.$live ? "#fff" : LAVENDER)};
`;

const FlagAxis = styled.div`
  ${small}
  display: flex;
  flex-direction: column;
  justify-content: space-between;
  padding-left: 4px;
  line-height: 13px;
  color: #fff;
  min-height: 0;
`;

const OscAxis = styled.div`
  ${small}
  display: grid;
  grid-template-rows: 37fr 65fr 64fr 37fr 13fr;
  padding-left: 3px;
  color: #fff;
`;

const DateAxis = styled.ol<{ $count: number; $tail: number }>`
  ${small}
  display: grid;
  grid-template-columns: repeat(${(p) => p.$count}, minmax(0, 64fr)) minmax(0, ${(p) => p.$tail}fr);
  margin: -2px 45px 0 0;
  padding: 0;
  list-style: none;
  height: 20px;
  color: #fff;
`;

const DateMark = styled.li`
  overflow: visible;
  &::before { content: ""; display: block; width: 1px; height: 3px; margin-left: 1px; background: #fff; }
`;

/* ---------- signal table ---------- */

const Signals = styled.table`
  position: absolute;
  left: 4px;
  top: 27px;
  width: 208px;
  height: 46px;
  table-layout: fixed;
  border-collapse: collapse;
  background: #00008b;
  color: #f4f4ff;
  font: 12px/16px "Open Sans", "Noto Sans", sans-serif;
`;

const Symbol = styled.th`
  padding: 0 0 0 4px;
  text-align: left;
  font-weight: 400;
  font-size: 13px;
`;

const Period = styled.th<{ $small?: boolean }>`
  padding: 0;
  font-weight: 400;
  font-size: ${(p) => (p.$small ? 9 : 12)}px;
  span { display: flex; justify-content: center; margin: 0 -4px; }
`;

const Cell = styled.td`
  padding: 0;
`;

const Lamp = styled.span<{ $on: boolean }>`
  display: block;
  width: 10px;
  height: 10px;
  margin: 0 auto;
  background: ${(p) => (p.$on ? "#ff4500" : "#fff")};
`;

/* ---------- drawing helpers ---------- */

const pairs = (s: string) => s.split(" ").map((t) => t.split(",").map(Number));

const noise = (n: number) => {
  const v = Math.sin(n * 127.1 + 11.7) * 43758.5453;
  return v - Math.floor(v);
};

function Candles({ spec }: { spec: ChartSpec }) {
  const out: React.ReactElement[] = [];
  const pts = spec.range;
  const end = pts[pts.length - 1][0];
  let k = 0;
  let prev = (pts[0][1] + pts[0][2]) / 2;
  const count = Math.round((end - pts[0][0]) / spec.step);
  for (let i = 0; i <= count; i++) {
    const x = end - (count - i) * spec.step;
    while (k < pts.length - 1 && pts[k + 1][0] < x) k++;
    const a = pts[k];
    const b = pts[Math.min(k + 1, pts.length - 1)];
    const near = Math.abs(a[0] - x) < Math.abs(b[0] - x) ? a : b;
    const close = Math.abs(near[0] - x) < spec.step * 0.6;
    const t = b[0] === a[0] ? 0 : Math.max(0, (x - a[0]) / (b[0] - a[0]));
    const hi = close ? near[1] : a[1] + (b[1] - a[1]) * t;
    const lo = close ? near[2] : a[2] + (b[2] - a[2]) * t;
    const mid = (hi + lo) / 2;
    const span = lo - hi;
    const top = hi + span * (0.08 + 0.3 * noise(i));
    const bottom = lo - span * (0.06 + 0.32 * noise(i + 500));
    const w = spec.unitX * 2;
    out.push(
      <g key={i}>
        <line x1={x} x2={x} y1={hi} y2={lo} />
        <rect x={x - w / 2} y={top} width={w} height={Math.max(3, bottom - top)} fill={mid > prev + 4 ? "#fff" : "#000"} />
      </g>
    );
    prev = mid;
  }
  return <g stroke="#00ff00" strokeWidth={1} shapeRendering="crispEdges">{out}</g>;
}

function MainDrawing({ spec }: { spec: ChartSpec }) {
  const ux = spec.unitX;
  const [x0, y0, w] = spec.mainBox.split(" ").map(Number);
  return (
    <Drawing viewBox={spec.mainBox} preserveAspectRatio="none" aria-hidden="true">
      <g fill="none" shapeRendering="crispEdges">
        {spec.levels.map((y) => (
          <line key={y} x1={x0} x2={x0 + w} y1={y} y2={y} stroke={LAVENDER} strokeDasharray="4 3" />
        ))}
        <line x1={x0} x2={x0 + w} y1={spec.liveLevel} y2={spec.liveLevel} stroke="#708090" />
      </g>
      <path d={`M${spec.shift - 4 * ux} ${y0} h${8 * ux} l${-4 * ux} 15z`} fill="#708090" />
      <Candles spec={spec} />
      <g fill="none" shapeRendering="crispEdges">
        {spec.lines.map((l, i) =>
          l.p.map((p, j) => (
            <polyline key={`${i}-${j}`} points={p} stroke={l.c} strokeWidth={l.w ?? 1} strokeDasharray={l.dash} />
          ))
        )}
      </g>
      {pairs(spec.highs).map(([x, y]) => <ellipse key={`h${x}`} cx={x} cy={y} rx={3 * ux} ry={9} fill="#ff0000" />)}
      {pairs(spec.lows).map(([x, y]) => <ellipse key={`l${x}`} cx={x} cy={y} rx={3 * ux} ry={9} fill={CYAN} />)}
      {pairs(spec.rings).map(([x, y]) => (
        <ellipse key={`r${x}`} cx={x} cy={y} rx={5 * ux} ry={15} fill="none" stroke="#ffff00" strokeWidth={2} />
      ))}
    </Drawing>
  );
}

function StripDrawing({ strip, x }: { strip: Strip; x: [number, number] }) {
  const bars = strip.bars.split(",").map((b) => {
    const [from, to] = b.slice(1).split("-").map(Number);
    return { key: b, kind: b[0], from, to };
  });
  const h = strip.height - 2;
  return (
    <Drawing viewBox={`${x[0]} 0 ${x[1]} ${h}`} preserveAspectRatio="none" shapeRendering="crispEdges" aria-hidden="true">
      {strip.base && <rect x={strip.base[0]} y={0} width={strip.base[1] - strip.base[0]} height={h} fill="#fff" />}
      {bars.map((b) => (
        <rect key={b.key} x={b.from} y={0} width={b.to - b.from} height={h} fill={barColor[b.kind]} />
      ))}
      <rect x={x[0]} y={h - 1} width={x[1]} height={1} fill="#ff4500" />
      {bars.filter((b) => b.kind === "O").map((b) => (
        <rect key={b.key} x={b.from} y={h - 1} width={b.to - b.from} height={1} fill={CYAN} />
      ))}
    </Drawing>
  );
}

function OscDrawing({ spec }: { spec: ChartSpec }) {
  const [x0, , w] = spec.oscBox.split(" ").map(Number);
  let last = "";
  const segments = spec.oscThick.split("|").map((s) => {
    const [kind, ...rest] = s.split(" ");
    const points = [last, ...rest].join(" ").trim();
    last = rest[rest.length - 1];
    return { kind, points };
  });
  return (
    <Drawing viewBox={spec.oscBox} preserveAspectRatio="none" fill="none" shapeRendering="crispEdges" aria-hidden="true">
      {spec.oscLevels.map((y) => (
        <line key={y} x1={x0} x2={x0 + w} y1={y} y2={y} stroke="#c8c8c8" strokeDasharray="4 3" />
      ))}
      {segments.map((s, i) => <polyline key={i} points={s.points} stroke={oscColor[s.kind]} strokeWidth={2} />)}
      <polyline points={spec.oscRed} stroke="#ff0000" />
      <polyline points={spec.oscWhite} stroke={LAVENDER} />
    </Drawing>
  );
}

const ChartIcon = () => (
  <svg width="15" height="15" viewBox="0 0 15 15" aria-hidden="true">
    <rect x="0.5" y="0.5" width="11" height="9" rx="1" fill="#fff" stroke="#3f86e8" />
    <path d="M1 2h10" stroke="#3f86e8" strokeWidth="1.5" />
    <path d="M2 6l2-2 1 2 2-2" fill="none" stroke="#3f86e8" />
    <rect x="3.5" y="4.5" width="11" height="10" rx="1" fill="#fff" stroke="#3f86e8" />
    <path d="M4 6h10" stroke="#8fb8f0" strokeWidth="1.5" />
    <path d="M5.5 8.5l1.5 3 2-3 1.5 3.5 2-3.5" fill="none" stroke="#3f86e8" />
  </svg>
);

const glyph = { fill: "#fff", stroke: "#4d5664" };
const MinGlyph = () => (
  <svg width="13" height="11" viewBox="0 0 13 11" aria-hidden="true"><rect x="1.5" y="6.5" width="10" height="3" rx="0.5" {...glyph} /></svg>
);
const MaxGlyph = () => (
  <svg width="13" height="11" viewBox="0 0 13 11" aria-hidden="true">
    <rect x="1.5" y="0.5" width="10" height="9" rx="0.5" {...glyph} />
    <rect x="4.5" y="3.5" width="4" height="3" fill="#c8d6e6" stroke="#4d5664" />
  </svg>
);
const CloseGlyph = () => (
  <svg width="13" height="11" viewBox="0 0 13 11" aria-hidden="true">
    <path d="M1.5 0.5h3l2 2.5 2-2.5h3l-3.4 4.5 3.4 4.5h-3l-2-2.5-2 2.5h-3l3.4-4.5z" {...glyph} />
  </svg>
);

const frames = ["W1", "D1", "H4", "H1", "M30", "M15", "M5", "M1"];

function SignalTable() {
  return (
    <Signals>
      <colgroup>
        <col />
        {frames.map((f) => <col key={f} width={18} />)}
        <col width={4} />
      </colgroup>
      <tbody>
        <tr>
          <Cell />
          {frames.map((f) => (
            <Period key={f} scope="col" $small={f.length > 2}><span>{f}</span></Period>
          ))}
          <Cell />
        </tr>
        <tr>
          <Symbol scope="row">JPN225</Symbol>
          {frames.map((f) => <Cell key={f}><Lamp $on={f !== "M1"} /></Cell>)}
          <Cell />
        </tr>
      </tbody>
    </Signals>
  );
}

function ChartWindow({ spec }: { spec: ChartSpec }) {
  const [gx, , gw] = spec.mainBox.split(" ").map(Number);
  const [cx, cy, rx, ry] = spec.ellipse;
  const gridHeight = spec.mainHeight + spec.strips.reduce((s, t) => s + t.height + 2, 0) + 2 + spec.oscHeight;
  return (
    <Frame $grow={spec.grow} $active={spec.active} $lowered={spec.lowered}>
      <TitleBar $active={spec.active}>
        <ChartIcon />
        <Title $active={spec.active}>{spec.name}</Title>
        <Buttons>
          <ChromeButton $kind={spec.active ? "blue" : "plain"} aria-label="Minimize"><MinGlyph /></ChromeButton>
          <ChromeButton $kind={spec.active ? "blue" : "plain"} aria-label="Maximize"><MaxGlyph /></ChromeButton>
          <ChromeButton $kind={spec.active ? "red" : "plain"} aria-label="Close"><CloseGlyph /></ChromeButton>
        </Buttons>
      </TitleBar>
      <Client $active={spec.active}>
        <ChartGrid>
          <GridColumns $h={gridHeight}>
            <Drawing viewBox={`${gx} 0 ${gw} 100`} preserveAspectRatio="none" shapeRendering="crispEdges" aria-hidden="true">
              {spec.grid.map((x) => (
                <line key={x} x1={x} x2={x} y1={0} y2={100} stroke="#fff" strokeDasharray="4 3" />
              ))}
            </Drawing>
          </GridColumns>
          <PanelRow $h={spec.mainHeight}>
            <Plot>
              <MainDrawing spec={spec} />
              <Quote>
                <svg width="8" height="5" viewBox="0 0 8 5" aria-hidden="true"><path d="M0 0h8L4 5z" fill="#fff" /></svg>
                {spec.name + "  31655.2 31655.2 31130.2 31227.7"}
              </Quote>
              <SignalTable />
              <Remaining>{spec.timer}</Remaining>
              <Atr>{spec.atr}</Atr>
            </Plot>
            <Axis $pad={spec.pricePad}>
              {spec.prices.map((p) => <Price key={p}>{p}</Price>)}
              {spec.boxes.map((b) => <PriceBox key={b.text} $top={b.top} $live={b.live}>{b.text}</PriceBox>)}
            </Axis>
          </PanelRow>
          {spec.strips.map((s, i) => (
            <PanelRow key={i} $h={s.height}>
              <Plot>
                <StripDrawing strip={s} x={spec.stripX} />
                <Caption>{s.label}</Caption>
              </Plot>
              <FlagAxis><span>1</span><span>0</span></FlagAxis>
            </PanelRow>
          ))}
          <PanelRow $h={spec.oscHeight}>
            <Plot>
              <OscDrawing spec={spec} />
              <Caption>{spec.oscName}</Caption>
            </Plot>
            <OscAxis>
              {["100", "80", "50", "20", "0"].map((v) => <span key={v}>{v}</span>)}
            </OscAxis>
          </PanelRow>
          <DateAxis $count={spec.dates.length} $tail={spec.dateTail}>
            {spec.dates.map((d) => <DateMark key={d}>{d}</DateMark>)}
          </DateAxis>
          <Layer viewBox={spec.ellipseBox} preserveAspectRatio="none" aria-hidden="true">
            <ellipse cx={cx} cy={cy} rx={rx} ry={ry} fill="none" stroke="#ffff00" strokeWidth={2} />
          </Layer>
        </ChartGrid>
      </Client>
    </Frame>
  );
}

export default function App() {
  return (
    <>
      <GlobalStyle />
      <Desktop>
        {[h4, daily, weekly].map((spec) => <ChartWindow key={spec.name} spec={spec} />)}
      </Desktop>
    </>
  );
}
